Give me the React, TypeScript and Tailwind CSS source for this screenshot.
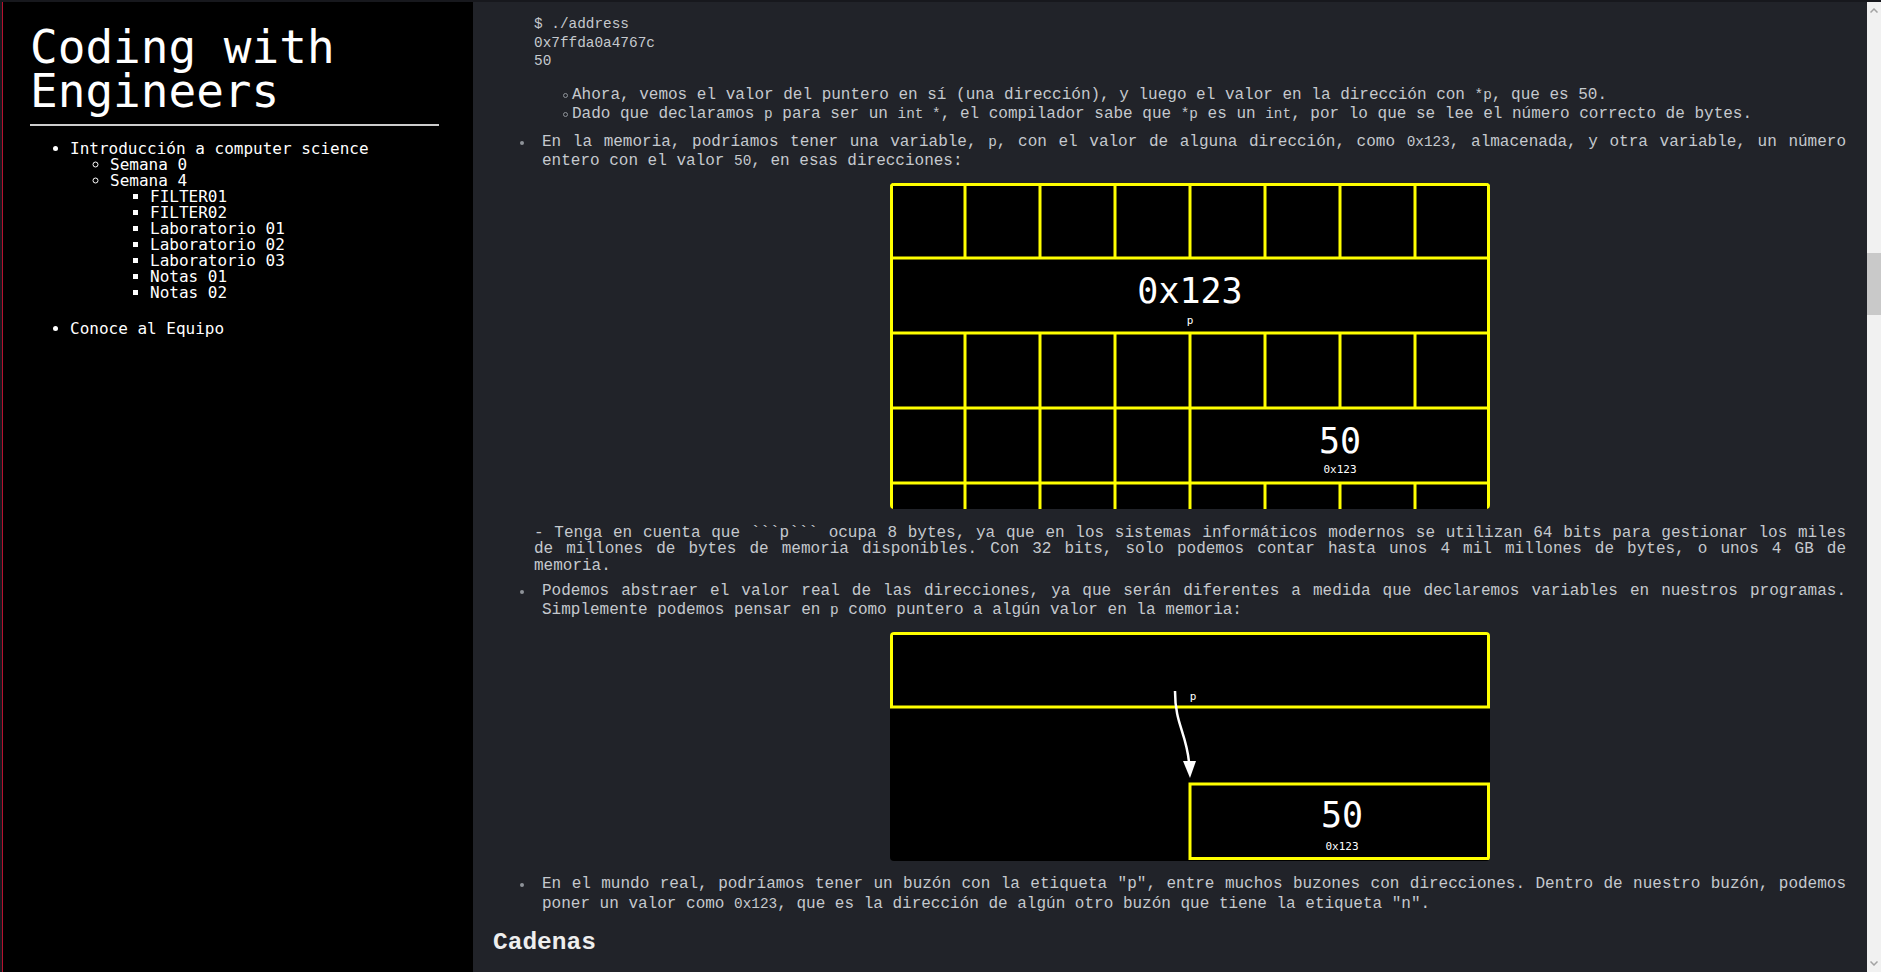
import React from 'react';

const mono = "font-['Liberation_Mono',monospace]";

const Code = ({ children }: { children: React.ReactNode }) => (
  <code className="text-[14.4px] leading-none">{children}</code>
);

const Disc = ({ children, className = '' }: { children: React.ReactNode; className?: string }) => (
  <div className={`flex ${className}`}>
    <span className="mt-[8px] ml-[27px] h-[4px] w-[4px] shrink-0 rounded-full bg-[#8e9399]" />
    <div className="ml-[18px] flex-1 text-justify">{children}</div>
  </div>
);

const Circle = ({ children }: { children: React.ReactNode }) => (
  <div className="flex">
    <span className="mt-[7px] ml-[70px] h-[5px] w-[5px] shrink-0 rounded-full border border-[#8e9399]" />
    <div className="ml-[4px] flex-1">{children}</div>
  </div>
);

const cols = [75, 150, 225, 300, 375, 450, 525];

const MemoryGrid = () => (
  <svg width="600" height="326" viewBox="0 0 600 326" className="block rounded-[4px] bg-black">
    <g stroke="#ffff00" strokeWidth="3" fill="none">
      <line x1="1.5" y1="0" x2="1.5" y2="326" />
      <line x1="598.5" y1="0" x2="598.5" y2="326" />
      {[1.5, 75, 150, 225, 300].map((y) => (
        <line key={y} x1="0" y1={y} x2="600" y2={y} />
      ))}
      {cols.map((x) => (
        <line key={'a' + x} x1={x} y1="0" x2={x} y2="75" />
      ))}
      {cols.map((x) => (
        <line key={'b' + x} x1={x} y1="150" x2={x} y2="225" />
      ))}
      {cols.slice(0, 4).map((x) => (
        <line key={'c' + x} x1={x} y1="225" x2={x} y2="300" />
      ))}
      {cols.map((x) => (
        <line key={'d' + x} x1={x} y1="300" x2={x} y2="326" />
      ))}
    </g>
    <g fill="#fff" fontFamily="DejaVu Sans Mono, monospace" textAnchor="middle">
      <text x="300" y="120" fontSize="35">0x123</text>
      <text x="300" y="141" fontSize="11">p</text>
      <text x="450" y="270" fontSize="35">50</text>
      <text x="450" y="290" fontSize="11">0x123</text>
    </g>
  </svg>
);

const PointerBoxes = () => (
  <svg width="600" height="229" viewBox="0 0 600 229" className="block rounded-[4px] bg-black">
    <g stroke="#ffff00" strokeWidth="3" fill="none">
      <rect x="1.5" y="1.5" width="597" height="73.5" />
      <rect x="300" y="152" width="298.5" height="74.5" />
    </g>
    <path d="M285 59 C285 92 296 100 299 130" stroke="#fff" strokeWidth="2.5" fill="none" />
    <polygon points="293,129 306,129 300,146" fill="#fff" />
    <g fill="#fff" fontFamily="DejaVu Sans Mono, monospace" textAnchor="middle">
      <text x="303" y="68" fontSize="11">p</text>
      <text x="452" y="195" fontSize="35">50</text>
      <text x="452" y="218" fontSize="11">0x123</text>
    </g>
  </svg>
);

const Sidebar = () => (
  <aside className="w-[471px] shrink-0 border-l border-[#b5122f] bg-black pt-[23px] pl-[27px] text-white font-['DejaVu_Sans_Mono',monospace]">
    <h1 className="text-[46px] leading-[44px]">Coding with Engineers</h1>
    <div className="mt-[11px] h-[2px] w-[409px] bg-[#cccccc]" />
    <ul className="mt-[15px] list-disc pl-[40px] text-[16px] leading-[16px]">
      <li className="mb-5">
        Introducción a computer science
        <ul className="list-[circle] pl-[40px]">
          <li>Semana 0</li>
          <li>
            Semana 4
            <ul className="list-[square] pl-[40px]">
              <li>FILTER01</li>
              <li>FILTER02</li>
              <li>Laboratorio 01</li>
              <li>Laboratorio 02</li>
              <li>Laboratorio 03</li>
              <li>Notas 01</li>
              <li>Notas 02</li>
            </ul>
          </li>
        </ul>
      </li>
      <li>Conoce al Equipo</li>
    </ul>
  </aside>
);

const Scrollbar = () => (
  <div className="flex w-[14px] shrink-0 flex-col bg-[#f1f1f1]">
    <div className="flex h-[17px] items-center justify-center">
      <svg width="8" height="5" viewBox="0 0 8 5">
        <path d="M0.5 4.5 L4 1 L7.5 4.5" stroke="#a3a3a3" strokeWidth="1.5" fill="none" />
      </svg>
    </div>
    <div className="h-[234px]" />
    <div className="mx-auto h-[62px] w-[14px] bg-[#c9c9c9]" />
    <div className="flex-1" />
    <div className="flex h-[17px] items-center justify-center">
      <svg width="8" height="5" viewBox="0 0 8 5">
        <path d="M0.5 0.5 L4 4 L7.5 0.5" stroke="#a3a3a3" strokeWidth="1.5" fill="none" />
      </svg>
    </div>
  </div>
);

export default function App() {
  return (
    <div className="flex h-[972px] w-full overflow-hidden bg-[#17181d] pt-[2px] pl-[2px]">
      <Sidebar />
      <main className={`flex-1 overflow-hidden bg-[#212329] pt-[13px] pl-[20px] pr-[21px] text-[16px] leading-[19.2px] text-[#c5c9ce] ${mono}`}>
        <pre className={`ml-[41px] text-[14.4px] leading-[18.6px] ${mono}`}>
          {'$ ./address\n0x7ffda0a4767c\n50'}
        </pre>

        <div className="mt-[15px]">
          <Circle>
            Ahora, vemos el valor del puntero en sí (una dirección), y luego el valor en la dirección con <Code>*p</Code>, que es 50.
          </Circle>
          <Circle>
            Dado que declaramos <Code>p</Code> para ser un <Code>int *</Code>, el compilador sabe que <Code>*p</Code> es un <Code>int</Code>, por lo que se lee el número correcto de bytes.
          </Circle>
        </div>

        <Disc className="mt-[9px]">
          En la memoria, podríamos tener una variable, <Code>p</Code>, con el valor de alguna dirección, como <Code>0x123</Code>, almacenada, y otra variable, un número entero con el valor <Code>50</Code>, en esas direcciones:
        </Disc>

        <div className="mt-[11px] ml-[41px] flex justify-center">
          <MemoryGrid />
        </div>

        <p className="mt-[16px] ml-[41px] text-justify leading-[16.8px]">
          - Tenga en cuenta que ```p``` ocupa 8 bytes, ya que en los sistemas informáticos modernos se utilizan 64 bits para gestionar los miles de millones de bytes de memoria disponibles. Con 32 bits, solo podemos contar hasta unos 4 mil millones de bytes, o unos 4 GB de memoria.
        </p>

        <Disc className="mt-[7px]">
          Podemos abstraer el valor real de las direcciones, ya que serán diferentes a medida que declaremos variables en nuestros programas. Simplemente podemos pensar en <Code>p</Code> como puntero a algún valor en la memoria:
        </Disc>

        <div className="mt-[12px] ml-[41px] flex justify-center">
          <PointerBoxes />
        </div>

        <Disc className="mt-[14px]">
          En el mundo real, podríamos tener un buzón con la etiqueta "p", entre muchos buzones con direcciones. Dentro de nuestro buzón, podemos poner un valor como <Code>0x123</Code>, que es la dirección de algún otro buzón que tiene la etiqueta "n".
        </Disc>

        <h2 className={`mt-[14px] text-[24.5px] leading-[30px] font-bold text-[#eeeeee] ${mono}`}>Cadenas</h2>
      </main>
      <Scrollbar />
    </div>
  );
}
